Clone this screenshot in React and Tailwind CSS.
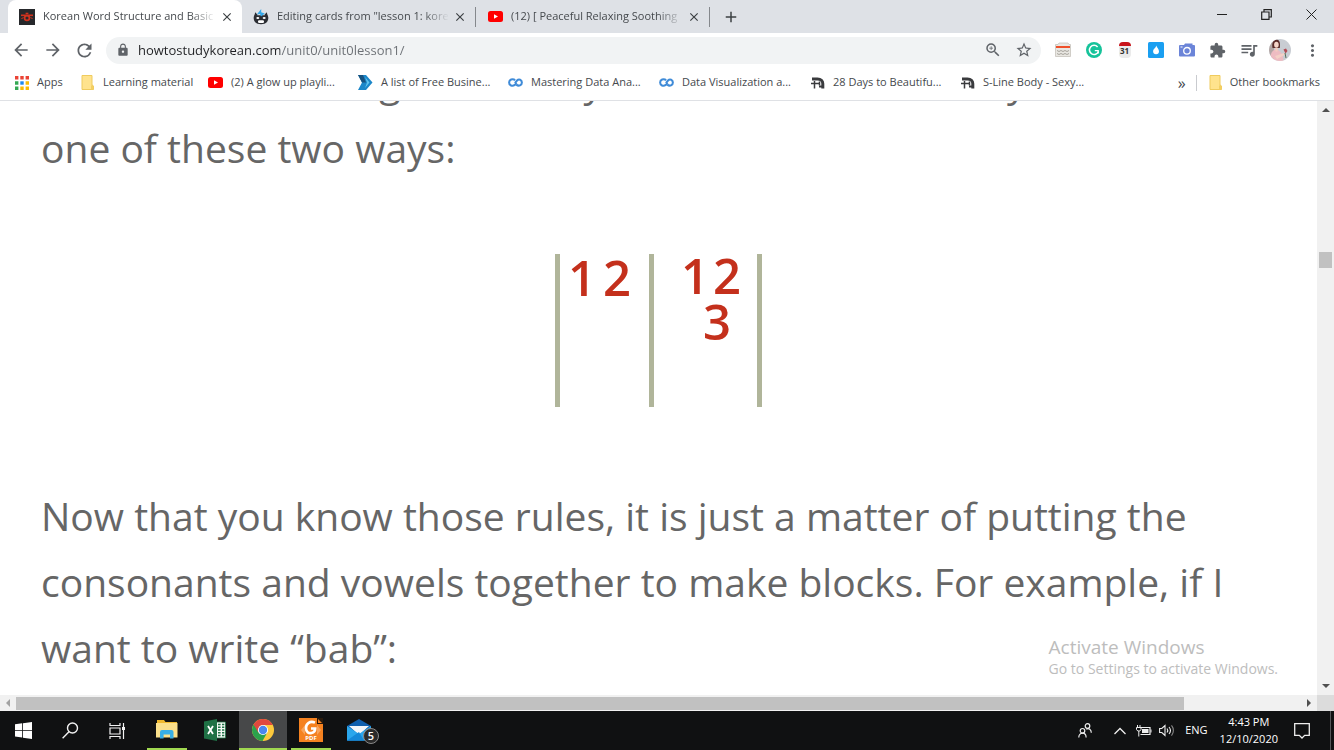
import React, { useState } from 'react';
import {
  MdArrowBack,
  MdArrowForward,
  MdRefresh,
  MdLock,
  MdZoomIn,
  MdStarBorder,
  MdExtension,
  MdQueueMusic,
  MdMoreVert,
  MdClose,
  MdAdd,
} from 'react-icons/md';

const SiteIcon = () => (
  <svg width="16" height="16" viewBox="0 0 16 16">
    <rect width="16" height="16" fill="#26282b" />
    <g stroke="#d0331f" fill="none">
      <path d="M2 6.300h12" strokeWidth="1.600" />
      <path d="M4.600 8.600l-2.200 1M11.400 8.600l2.200 1" />
      <circle cx="8" cy="9" r="2.400" strokeWidth="1.700" />
      <path d="M6.600 4.400h2.800" strokeWidth="1.400" />
    </g>
  </svg>
);

const MemriseIcon = () => (
  <svg width="16" height="16" viewBox="0 0 16 16">
    <path d="M2 5.500C.3 7 .2 11 2 13c2.600 3 9.400 3 12 0 1.800-2 1.700-6 0-7.500-1 .6-2 .8-3 .8H5C4 6.300 3 6.100 2 5.500z" fill="#2b2d33" />
    <path d="M2.200 3.200 4.600 5.800 1.400 6.800z M13.800 3.200 11.400 5.800l3.200 1z" fill="#2b2d33" />
    <path d="M3.800 5.400 8.200 0v3.200l3.600 1.200L8 7.400 7 5z" fill="#35a8ea" />
    <ellipse cx="4.800" cy="9" rx="1.500" ry="1.100" fill="#fff" />
    <ellipse cx="11.200" cy="9" rx="1.500" ry="1.100" fill="#fff" />
    <rect x="5" y="11.300" width="6" height="2.600" rx="1.200" fill="#fff" />
  </svg>
);

const YoutubeIcon = () => (
  <svg width="15" height="15" viewBox="0 0 15 15">
    <rect y="2" width="15" height="11" rx="2.500" fill="#f00" />
    <path d="M6 5.200v4.600l4-2.300z" fill="#fff" />
  </svg>
);

const AppsIcon = () => (
  <svg width="14" height="14" viewBox="0 0 14 14">
    <path d="M0 0h3.400v3.400H0zM5.300 0h3.400v3.400H5.300zM10.600 0H14v3.400h-3.400z" fill="#ea4335" />
    <path d="M0 5.300h3.400v3.400H0zM0 10.600h3.400V14H0z" fill="#34a853" />
    <path d="M5.300 5.300h3.400v3.400H5.300z" fill="#1e88f0" />
    <path d="M10.600 5.300H14v3.400h-3.400zM10.600 10.600H14V14h-3.400zM5.300 10.600h3.400V14H5.300z" fill="#fbbc05" />
  </svg>
);

const FolderIcon = () => (
  <svg width="13" height="15" viewBox="0 0 13 15">
    <path d="M1 .5h10v9.500l1.500 1v3.500H1z" fill="#ffe38d" stroke="#efcb5e" />
    <path d="M10 14.500V11l1-1.500 1.500 1.500v3.500z" fill="#f3cf63" />
  </svg>
);

const ArrowIcon = () => (
  <svg width="15" height="15" viewBox="0 0 15 15">
    <path d="M0 0h8l6.500 7.500L8 15H0l4-7.500z" fill="#1c87c9" />
    <path d="M0 0h5l3 7.500H4z" fill="#17527f" />
    <path d="M7 2l4.500 5.500L7 13l2-5.500z" fill="#5fc3ee" />
  </svg>
);

const CourseraIcon = () => (
  <svg width="16" height="15" viewBox="0 0 16 15" fill="none" stroke="#3f8bd8" strokeWidth="2.200">
    <path d="M7.600 5C4.800 2.800 1.200 4.600 1.200 7.500s3.400 4.600 6 2.600L9.200 8" />
    <path d="M7.400 8.200 9.600 5.400c2-2 5.200-.8 5.200 2.100s-3.200 4.500-6 2.300" />
  </svg>
);

const FitnessIcon = () => (
  <svg width="14" height="14" viewBox="0 0 14 14" fill="none" stroke="#3a3b3e">
    <path d="M1 3h5.500c3.500 0 5.300 1.800 5.300 4.800v4.700" strokeWidth="3" />
    <path d="M0 7.600h9M3.500 5v7.500M8.500 5.500v4" strokeWidth="1.500" />
    <path d="M8 10.500h3" strokeWidth="2" />
  </svg>
);

const ListExt = () => (
  <svg width="16" height="16" viewBox="0 0 16 16">
    <path d="M1 2.500h2L4 1h9l1 1.500h1.500v12H.5v-12z" fill="#e9e7e2" stroke="#c6c3bd" strokeWidth=".8" />
    <path d="M1 5h14" stroke="#f0502a" strokeWidth="2" />
    <path d="M2 8.500l2 1 2-1 2 1 2-1 2 1 2-1M2 11.500l2 1 2-1 2 1 2-1 2 1 2-1" stroke="#a7a49d" fill="none" />
  </svg>
);

const GrammarlyExt = () => (
  <svg width="16" height="16" viewBox="0 0 16 16">
    <circle cx="8" cy="8" r="8" fill="#15c39a" />
    <path d="M11.600 5A4.600 4.600 0 1 0 12.400 9.500" fill="none" stroke="#fff" strokeWidth="1.500" />
    <path d="M8.800 8.600h3.400v2.800" fill="none" stroke="#fff" strokeWidth="1.300" />
  </svg>
);

const CalendarExt = () => (
  <span className="flex h-4 w-3 flex-col overflow-hidden rounded-sm bg-[#ebebeb]">
    <span className="h-1 shrink-0 bg-[#c9141b]" />
    <span className="text-center text-[8px] leading-[10px] font-bold text-[#333]">31</span>
  </span>
);

const DropExt = () => (
  <svg width="16" height="16" viewBox="0 0 16 16">
    <rect width="16" height="16" rx="1.500" fill="#1a9ff1" />
    <path d="M8.300 3.500c.5 2 2.700 3.500 2.700 5.800a2.900 2.900 0 0 1-5.900 0C5.100 7 7.900 6 8.300 3.500z" fill="#fff" />
  </svg>
);

const CameraExt = () => (
  <svg width="16" height="14" viewBox="0 0 16 14">
    <path d="M1 2h4l1-1.500h7.500V2H15a1 1 0 0 1 1 1v9.500a1 1 0 0 1-1 1H1a1 1 0 0 1-1-1V3a1 1 0 0 1 1-1z" fill="#6b84d8" />
    <circle cx="8" cy="7.800" r="3.300" fill="none" stroke="#fff" strokeWidth="1.300" />
    <circle cx="8" cy="7.800" r="1.300" fill="#6b84d8" />
    <path d="M1.500 4h2" stroke="#fff" />
  </svg>
);

const Avatar = () => (
  <svg width="22" height="22" viewBox="0 0 22 22">
    <clipPath id="face">
      <circle cx="11" cy="11" r="11" />
    </clipPath>
    <g clipPath="url(#face)">
      <rect width="22" height="22" fill="#c9cdd3" />
      <path d="M0 0h5v22H0z" fill="#b2a6a4" />
      <path d="M3.500 9c-1-5 1-8.500 4-8.500S11.500 4 10.800 9z" fill="#5a2b28" />
      <ellipse cx="7.400" cy="5.800" rx="2.300" ry="3" fill="#f5d5c8" />
      <path d="M1 22c0-7 2-11 6-11.500 4 .5 7 4 7.500 11.500z" fill="#eebcc2" />
      <path d="M6 9h3l-.5 3.500h-2z" fill="#f3cdbf" />
      <path d="M6 17l9-3 1.500 1.500L8 20z" fill="#f4d0c6" />
      <path d="M14.500 10.500l2.500-1 1.500 2.500-2 2.500z" fill="#b24b54" />
      <path d="M16 14l1 5" stroke="#54705a" />
    </g>
  </svg>
);

const WindowsIcon = () => (
  <svg width="17" height="17" viewBox="0 0 17 17" fill="#fff">
    <path d="M0 2.300 7.200 1.300V8H0zM8 1.200 17 0v8H8zM0 8.800h7.200v6.800L0 14.600zM8 8.800h9V17l-9-1.300z" />
  </svg>
);

const SearchIcon = () => (
  <svg width="17" height="17" viewBox="0 0 17 17" fill="none" stroke="#f2f2f2" strokeWidth="1.400">
    <circle cx="10.500" cy="6" r="5" />
    <path d="M7 9.700.6 16.200" />
  </svg>
);

const TaskViewIcon = () => (
  <svg width="17" height="16" viewBox="0 0 17 16" fill="none" stroke="#f2f2f2">
    <path d="M1 0v2.500h10V0M1 16v-2.500h10V16M1 5h10v6H1zM14.500 0v16" strokeWidth="1.200" />
    <path d="M13 5.500h3" strokeWidth="3" />
  </svg>
);

const ExplorerIcon = () => (
  <svg width="22" height="19" viewBox="0 0 22 19">
    <path d="M1 0h7l1.500 2H21v3H1z" fill="#f0b92e" />
    <path d="M0 3h21.500v14.500H0z" fill="#fbe08b" />
    <path d="M4 18.500V12a2 2 0 0 1 2-2h9.500a2 2 0 0 1 2 2v6.500H14v-4H7.600v4z" fill="#37aee5" />
  </svg>
);

const ExcelIcon = () => (
  <svg width="22" height="22" viewBox="0 0 22 22">
    <path d="M11 3h10.500v16H11z" fill="#f4f8f5" stroke="#1f7145" strokeWidth=".8" />
    <path d="M14 5.500h2.600M14 8.300h2.600M14 11h2.600M14 13.800h2.600M14 16.500h2.600M18 5.500h2.300M18 8.300h2.300M18 11h2.300M18 13.800h2.300M18 16.500h2.300" stroke="#1f7145" strokeWidth="1.400" />
    <path d="M0 2.500 13 0v22L0 19.500z" fill="#1f7145" />
    <path d="M4 7l5 8M9 7l-5 8" stroke="#fff" strokeWidth="1.800" />
  </svg>
);

const ChromeIcon = () => (
  <svg width="22" height="22" viewBox="0 0 22 22">
    <circle cx="11" cy="11" r="11" fill="#fdc93c" />
    <path d="M11 11 1.500 5.500A11 11 0 0 0 10.500 22l4.800-8.500z" fill="#2ba24c" />
    <path d="M11 11V6h9.800A11 11 0 0 0 1.500 5.500l4.800 8z" fill="#e0483e" />
    <circle cx="11" cy="11" r="5.100" fill="#fff" />
    <circle cx="11" cy="11" r="4.200" fill="#4a87ee" />
  </svg>
);

const FoxitIcon = () => (
  <span className="relative flex h-6 w-6 items-end justify-center bg-[#f58220]">
    <svg className="absolute inset-0" width="24" height="24" viewBox="0 0 24 24">
      <path d="M18 0h6v6h-6z" fill="#2a1a0c" />
      <path d="M19 1v4h4z" fill="#f58220" />
      <path d="M2 12l4-5v10zM22 12l-4-5v10z" fill="#f9a45b" />
      <path d="M16 4.600C11 2.500 7 5.500 7 10c0 3.700 2.500 5.700 5.500 5 2.500-.6 3.700-2.300 3.700-4.500H12" fill="none" stroke="#fff" strokeWidth="2.600" />
    </svg>
    <span className="relative text-[6px] leading-[7px] font-bold text-white">PDF</span>
  </span>
);

const MailIcon = () => (
  <span className="relative h-[22px] w-6">
    <svg width="24" height="22" viewBox="0 0 24 22">
      <path d="M0 7 12 0l12 7v14.500H0z" fill="#0f5fae" />
      <path d="M2 7h20l-10 9z" fill="#f2f6fa" />
      <path d="M0 7l12 8 12-8v14.500H0z" fill="#2aa6ec" />
      <path d="M0 21.500 12 13l5 8.500z" fill="#1588d8" />
    </svg>
    <span className="absolute top-[9px] left-4 flex h-4 w-4 items-center justify-center rounded-full border border-[#8a8a8a] bg-[#2b2b2b] text-[11px] leading-none font-semibold text-white">
      5
    </span>
  </span>
);

const PeopleIcon = () => (
  <svg width="14" height="15" viewBox="0 0 14 15" fill="none" stroke="#eee" strokeWidth="1.200">
    <circle cx="9.500" cy="3" r="2.300" />
    <circle cx="4.500" cy="7.800" r="2.300" />
    <path d="M.8 14.500c0-2.800 1.700-4.300 3.700-4.300s3.600 1.500 3.600 4.300M8.300 6.200c2.700-1.400 5 .6 5 3.600" />
  </svg>
);

const BatteryIcon = () => (
  <svg width="16" height="12" viewBox="0 0 16 12" fill="none" stroke="#eee">
    <path d="M5 2.500h9v7H4.500" strokeWidth="1.200" />
    <path d="M6 4h6.500v4H6z" fill="#eee" stroke="none" />
    <path d="M15 4.500v3M1.500 0v2M4 0v2M.5 2.500h4.500v2L3.800 6H1.800L.5 4.500zM2.800 6v5.500" />
  </svg>
);

const VolumeIcon = () => (
  <svg width="16" height="13" viewBox="0 0 16 13" fill="none" stroke="#eee" strokeWidth="1.100">
    <path d="M.6 4.500h2.200L6 1.500v10L2.800 8.500H.6z" />
    <path d="M8 4.500c.9 1.200.9 2.800 0 4M10 3c1.700 2 1.700 5 0 7" />
    <path d="M12.500 1.300c2.500 3 2.500 7.400 0 10.400" stroke="#888" />
  </svg>
);

const NoticeIcon = () => (
  <svg width="16" height="16" viewBox="0 0 16 16" fill="none" stroke="#eee" strokeWidth="1.300">
    <path d="M.7.700h14.600v11.600h-4.600L8 15l-2.700-2.700H.7z" />
  </svg>
);

const tabs = [
  { title: 'Korean Word Structure and Basic', icon: <SiteIcon />, active: true },
  { title: 'Editing cards from "lesson 1: kore', icon: <MemriseIcon /> },
  { title: '(12) [ Peaceful Relaxing Soothing', icon: <YoutubeIcon /> },
];

const bookmarks = [
  { label: 'Apps', icon: <AppsIcon />, width: 'w-[66px]' },
  { label: 'Learning material', icon: <FolderIcon />, width: 'w-[128px]' },
  { label: '(2) A glow up playli...', icon: <YoutubeIcon />, width: 'w-[150px]' },
  { label: 'A list of Free Busine...', icon: <ArrowIcon />, width: 'w-[150px]' },
  { label: 'Mastering Data Ana...', icon: <CourseraIcon />, width: 'w-[151px]' },
  { label: 'Data Visualization a...', icon: <CourseraIcon />, width: 'w-[151px]' },
  { label: '28 Days to Beautifu...', icon: <FitnessIcon />, width: 'w-[150px]' },
  { label: 'S-Line Body - Sexy...', icon: <FitnessIcon />, width: 'w-[150px]' },
];

const extensions = [
  { name: 'Lists', icon: <ListExt /> },
  { name: 'Grammarly', icon: <GrammarlyExt /> },
  { name: 'Calendar', icon: <CalendarExt /> },
  { name: 'Drop', icon: <DropExt /> },
  { name: 'Camera', icon: <CameraExt /> },
  { name: 'Extensions', icon: <MdExtension size={17} /> },
  { name: 'Media controls', icon: <MdQueueMusic size={20} /> },
  { name: 'Profile', icon: <Avatar /> },
];

const apps = [
  { name: 'File Explorer', icon: <ExplorerIcon />, open: true },
  { name: 'Excel', icon: <ExcelIcon /> },
  { name: 'Chrome', icon: <ChromeIcon />, open: true, active: true },
  { name: 'Foxit PDF', icon: <FoxitIcon />, open: true },
  { name: 'Mail', icon: <MailIcon /> },
];

const TabStrip = () => (
  <div className="flex h-[33px] shrink-0 bg-[#dee1e6] pl-2">
    {tabs.map((tab) => (
      <div
        key={tab.title}
        className={`flex w-[234px] items-center pr-2 pl-[11px] ${tab.active ? 'rounded-t-lg bg-white' : ''}`}
      >
        <span className="flex w-4 shrink-0 justify-center">{tab.icon}</span>
        <span className="ml-2 flex-1 overflow-hidden mask-r-from-85% whitespace-nowrap text-[11px] text-[#45494d]">
          {tab.title}
        </span>
        <button aria-label="Close tab" className="ml-1 text-[#3c4043]">
          <MdClose size={14} />
        </button>
        {!tab.active && <span className="ml-2 -mr-2 h-5 w-px bg-[#85888c]" />}
      </div>
    ))}
    <button aria-label="New tab" className="ml-3 text-[#3c4043]">
      <MdAdd size={18} />
    </button>
    <div className="ml-auto flex pb-1">
      <button aria-label="Minimize" className="flex w-[45px] items-center justify-center">
        <span className="h-px w-2.5 bg-[#222]" />
      </button>
      <button aria-label="Restore" className="flex w-[45px] items-center justify-center">
        <svg width="11" height="11" viewBox="0 0 11 11" fill="none" stroke="#222" strokeWidth="1.200">
          <path d="M.7 3h7.300v7.300H.7zM3 3V.7h7.300V8H8" />
        </svg>
      </button>
      <button aria-label="Close" className="flex w-[45px] items-center justify-center">
        <svg width="11" height="11" viewBox="0 0 11 11" stroke="#222">
          <path d="M.5.500l10 10M10.500.500l-10 10" />
        </svg>
      </button>
    </div>
  </div>
);

const Toolbar = () => {
  const [url, setUrl] = useState('howtostudykorean.com/unit0/unit0lesson1/');

  return (
    <div className="flex h-[34px] shrink-0 items-center pr-1.5 pl-[5px] text-[#5f6368]">
      <button aria-label="Back" className="flex w-8 justify-center">
        <MdArrowBack size={20} />
      </button>
      <button aria-label="Forward" className="flex w-8 justify-center">
        <MdArrowForward size={20} />
      </button>
      <button aria-label="Reload" className="flex w-[30px] justify-center">
        <MdRefresh size={21} />
      </button>
      <div className="ml-[7px] flex h-[27px] flex-1 items-center rounded-full bg-[#f1f3f4] pr-2 pl-2.5">
        <MdLock size={14} />
        <input
          aria-label="Address"
          value={url}
          onChange={(e) => setUrl(e.target.value)}
          className="ml-2 flex-1 bg-linear-to-r from-[#202124] from-[142px] to-[#6b6f74] to-[142px] bg-clip-text pt-0.5 text-[13px] text-transparent outline-none"
        />
        <button aria-label="Zoom" className="flex w-8 justify-center">
          <MdZoomIn size={18} />
        </button>
        <button aria-label="Bookmark" className="flex w-6 justify-end">
          <MdStarBorder size={18} />
        </button>
      </div>
      <div className="ml-1.5 flex items-center">
        {extensions.map((ext) => (
          <button key={ext.name} aria-label={ext.name} className="flex w-[31px] justify-center">
            {ext.icon}
          </button>
        ))}
        <button aria-label="Menu" className="ml-0.5 flex w-[31px] justify-center">
          <MdMoreVert size={19} />
        </button>
      </div>
    </div>
  );
};

const BookmarksBar = () => (
  <nav className="flex h-[34px] shrink-0 items-center border-b border-[#dfe1e5] pr-3.5 pb-0.5 pl-3.5 text-[11px] text-[#45494d]">
    {bookmarks.map((item) => (
      <a key={item.label} href="#" className={`flex shrink-0 items-center gap-2 whitespace-nowrap ${item.width}`}>
        <span className="flex w-[15px] shrink-0 justify-center">{item.icon}</span>
        {item.label}
      </a>
    ))}
    <button aria-label="More bookmarks" className="ml-auto text-base leading-none">
      »
    </button>
    <span className="ml-2.5 h-4 w-px bg-[#c9cbcf]" />
    <a href="#" className="ml-3 flex items-center gap-2">
      <FolderIcon />
      Other bookmarks
    </a>
  </nav>
);

// the two syllable layouts for a vertical vowel
const BlockDiagram = () => (
  <svg className="mx-auto mt-[73px] mb-[76px] block" width="208" height="153" viewBox="0 0 208 153">
    <g fill="#b0b59a">
      <rect width="5" height="153" />
      <rect x="94" width="5" height="153" />
      <rect x="202" width="5" height="153" />
    </g>
    <g fill="#c4301c" fontFamily="Open Sans, sans-serif" fontSize="49" fontWeight="600">
      <text x="13" y="42">1</text>
      <text x="48" y="42">2</text>
      <text x="126" y="40">1</text>
      <text x="158" y="40">2</text>
      <text x="148" y="86">3</text>
    </g>
  </svg>
);

const Page = () => (
  <main className="min-w-0 flex-1 overflow-hidden pr-20 pl-[41px] text-[39px] leading-[66px] text-[#666]">
    <p className="-mt-[52px]">2. Blocks containing a vertically drawn vowel are always drawn in one of these two ways:</p>
    <div className="-mr-10">
      <BlockDiagram />
    </div>
    <p>
      Now that you know those rules, it is just a matter of putting the consonants and vowels together to make
      blocks. For example, if I want to write “bab”:
    </p>
  </main>
);

const Taskbar = () => (
  <footer className="flex h-[39px] shrink-0 bg-[#101112] text-white">
    <button aria-label="Start" className="flex w-[47px] items-center justify-center">
      <WindowsIcon />
    </button>
    <button aria-label="Search" className="flex w-[47px] items-center justify-center">
      <SearchIcon />
    </button>
    <button aria-label="Task View" className="flex w-[47px] items-center justify-center">
      <TaskViewIcon />
    </button>
    <div className="ml-0.5 flex">
      {apps.map((app) => (
        <button
          key={app.name}
          aria-label={app.name}
          className={`flex w-12 flex-col items-center ${app.active ? 'bg-[#474849]' : ''}`}
        >
          <span className="flex flex-1 items-center">{app.icon}</span>
          <span className={`h-0.5 ${app.active ? 'w-full' : 'w-10'} ${app.open ? 'bg-[#a0d850]' : ''}`} />
        </button>
      ))}
    </div>
    <div className="ml-auto flex items-center text-[11px]">
      <PeopleIcon />
      <svg className="ml-[22px]" width="12" height="8" viewBox="0 0 12 8" fill="none" stroke="#eee" strokeWidth="1.300">
        <path d="M.5 7 6 1.500 11.500 7" />
      </svg>
      <span className="ml-2.5">
        <BatteryIcon />
      </span>
      <span className="ml-[7px]">
        <VolumeIcon />
      </span>
      <span className="ml-2.5">ENG</span>
      <div className="ml-3 pb-0.5 text-center leading-[17px]">
        <div>4:43 PM</div>
        <div>12/10/2020</div>
      </div>
      <button aria-label="Notifications" className="ml-4">
        <NoticeIcon />
      </button>
      <span className="mr-[3px] ml-5 h-full w-px bg-[#55575a]" />
    </div>
  </footer>
);

const App = () => {
  return (
    <div className="flex h-screen flex-col overflow-hidden bg-white font-['Open_Sans','Noto_Sans',sans-serif]">
      <TabStrip />
      <Toolbar />
      <BookmarksBar />
      <div className="relative flex min-h-0 flex-1">
        <Page />
        <div className="flex w-[17px] shrink-0 flex-col items-center bg-[#f1f1f1] py-[7px]">
          <span className="border-x-4 border-b-4 border-x-transparent border-b-[#505050]" />
          <span className="mt-[140px] h-4 w-[13px] bg-[#c1c1c1]" />
          <span className="mt-auto border-x-4 border-t-4 border-x-transparent border-t-[#505050]" />
        </div>
        <div className="absolute right-14 bottom-4 text-[#bdbdbd]">
          <div className="text-[19px] leading-6">Activate Windows</div>
          <div className="text-sm leading-5">Go to Settings to activate Windows.</div>
        </div>
      </div>
      <div className="flex h-4 shrink-0 bg-[#f1f1f1]">
        <div className="flex flex-1 items-center gap-1.5 px-1.5">
          <span className="border-y-4 border-r-4 border-y-transparent border-r-[#a3a3a3]" />
          <span className="h-[13px] w-[89.5%] bg-[#c1c1c1]" />
          <span className="ml-auto border-y-4 border-l-4 border-y-transparent border-l-[#505050]" />
        </div>
        <div className="w-[17px] bg-[#dcdcdc]" />
      </div>
      <Taskbar />
    </div>
  );
};

export default App;
